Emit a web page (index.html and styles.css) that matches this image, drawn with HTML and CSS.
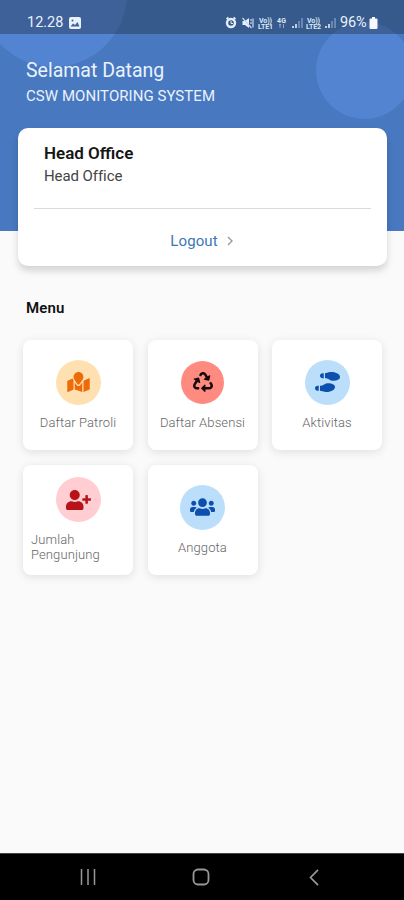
FILE: index.html
```html
<!DOCTYPE html>
<html lang="id">
<head>
<meta charset="utf-8">
<title>CSW Monitoring System</title>
<link rel="stylesheet" href="styles.css">
</head>
<body>
<div class="phone">
  <header class="hero">
    <span class="bubble bubble-left"></span>
    <span class="bubble bubble-right"></span>
    <div class="status">
      <span class="clock">12.28</span>
      <svg class="photo" viewBox="0 0 12 12"><rect width="12" height="12" rx="2" fill="#e9f1fb"/><path d="M1.5 9.5 4 6.5l2 1.5 2.5-3 2 4.500z" fill="#40639b"/><circle cx="3.500" cy="3.500" r="1" fill="#40639b"/></svg>
      <svg class="signals" viewBox="0 0 112 14">
        <g fill="none" stroke="#e6eef9">
          <path d="M1.500 3 3.500 1.500M10.500 3 8.500 1.500" stroke-width="1.600"/>
          <circle cx="6" cy="7" r="4" stroke-width="2.400"/><path d="M6 5v2.500h2" stroke-width="1"/>
        </g>
        <path d="M17.500 5h2.500l4-3v10l-4-3h-2.500z" fill="#e6eef9"/>
        <path d="M17.500 2l9 10M26 3v2M26 6v2M28 2.500v9" stroke="#c9d8ee" stroke-width="1.200"/>
        <g fill="#dce7f5" class="tiny">
          <text x="34" y="6.500" textLength="13">Vo))</text><text x="33" y="13" textLength="15">LTE1</text>
          <text x="52" y="6.500" textLength="9">4G</text>
          <text x="82" y="6.500" textLength="13">Vo))</text><text x="81" y="13" textLength="15">LTE2</text>
        </g>
        <path d="M55 12V8M53.800 9.200 55 8l1.200 1.200M58.500 8v4" fill="none" stroke="#8fa8cf"/>
        <path d="M68 12v-2M71 12V8M101 12v-2M104 12V8" stroke="#d5e2f3" stroke-width="1.700"/>
        <path d="M74 12V5M77 12V2M107 12V5M110 12V2" stroke="#7c98c4" stroke-width="1.500"/>
      </svg>
      <span class="percent">96%</span>
      <svg class="battery" viewBox="0 0 9 12"><path d="M3 0h3v1.500h1.500a1 1 0 0 1 1 1V11a1 1 0 0 1-1 1h-6a1 1 0 0 1-1-1V2.500a1 1 0 0 1 1-1H3z" fill="#f5f9ff"/></svg>
    </div>
    <h1>Selamat Datang</h1>
    <p class="system">CSW MONITORING SYSTEM</p>
  </header>

  <section class="account">
    <div class="who"><h2>Head Office</h2><p>Head Office</p></div>
    <div class="logout"><span>Logout</span><svg viewBox="0 0 6 10"><path d="M1 1l4 4-4 4" fill="none" stroke="#999" stroke-width="1.400"/></svg></div>
  </section>

  <main>
    <h3>Menu</h3>
    <div class="grid">
      <div class="tile">
        <span class="disc sand"><svg width="23" height="20" viewBox="0 0 576 512"><path d="M288 0c-69.590 0-126 56.410-126 126 0 56.260 82.350 158.800 113.900 196.020 6.390 7.540 17.820 7.540 24.200 0C331.650 284.800 414 182.260 414 126 414 56.410 357.590 0 288 0zM20.120 215.950A32.006 32.006 0 0 0 0 245.660v250.320c0 11.320 11.430 19.060 21.940 14.860L160 448V214.920c-8.840-15.980-16.070-31.540-21.250-46.420L20.120 215.950zM288 359.670c-14.070 0-27.380-6.180-36.510-16.960-19.660-23.200-40.570-49.620-59.490-76.720v182l192 64V266c-18.920 27.090-39.820 53.520-59.490 76.720-9.130 10.770-22.440 16.950-36.510 16.950zm266.060-198.510L416 224v288l139.880-55.950A31.996 31.996 0 0 0 576 426.340V176.020c0-11.320-11.430-19.060-21.940-14.860z"/></svg></span>
        <p>Daftar Patroli</p>
      </div>
      <div class="tile">
        <span class="disc coral"><svg width="20" height="20" viewBox="0 0 512 512"><path d="M184.561 261.903c3.232 13.997-12.123 24.635-24.068 17.168l-40.736-25.455-50.867 81.402C55.606 356.273 70.960 384 96.012 384H148c6.627 0 12 5.373 12 12v40c0 6.627-5.373 12-12 12H96.115c-75.334 0-121.302-83.048-81.408-146.880l50.822-81.388-40.725-25.448c-12.081-7.547-8.966-25.961 4.879-29.158l110.237-25.450c8.611-1.988 17.201 3.381 19.189 11.990l25.452 110.237zm98.561-182.915l41.289 66.076-40.740 25.457c-12.051 7.528-9 25.953 4.879 29.158l110.237 25.450c8.672 1.999 17.215-3.438 19.189-11.990l25.450-110.237c3.197-13.844-11.990-24.719-24.068-17.168l-40.687 25.424-41.263-66.082c-37.521-60.033-125.209-60.171-162.816 0l-17.963 28.766c-3.510 5.620-1.800 13.021 3.820 16.533l33.919 21.195c5.620 3.512 13.024 1.803 16.536-3.817l17.961-28.743c12.712-20.341 41.973-19.676 54.257-.022zM497.288 301.120l-27.515-44.065c-3.511-5.623-10.916-7.334-16.538-3.821l-33.861 21.159c-5.620 3.512-7.330 10.915-3.818 16.536l27.564 44.112c13.257 21.211-2.057 48.960-27.136 48.960H320V336.020c0-14.213-17.242-21.383-27.313-11.313l-80 79.981c-6.249 6.248-6.249 16.379 0 22.627l80 79.989C302.689 517.308 320 510.300 320 495.989V448h95.880c75.274 0 121.335-82.997 81.408-146.880z"/></svg></span>
        <p>Daftar Absensi</p>
      </div>
      <div class="tile">
        <span class="disc sky"><svg width="25" height="20" viewBox="0 0 640 512"><path d="M192 160h32V32h-32c-35.350 0-64 28.650-64 64s28.650 64 64 64zM0 416c0 35.350 28.650 64 64 64h32V352H64c-35.350 0-64 28.650-64 64zm337.460-128c-34.910 0-76.160 13.120-104.730 32-24.790 16.380-44.520 32-104.730 32v128l57.530 15.970c26.210 7.280 53.010 13.120 80.310 15.050 32.690 2.310 65.600.670 97.580-6.200C472.900 481.300 512 429.220 512 384c0-64-84.180-96-174.540-96zM491.420 7.250C459.440.320 426.530-1.330 393.840.990c-27.300 1.930-54.100 7.770-80.310 15.040L256 32v128c60.200 0 79.940 15.620 104.730 32 28.570 18.880 69.820 32 104.730 32C555.820 224 640 192 640 128c0-45.220-39.100-97.300-148.580-120.750z"/></svg></span>
        <p>Aktivitas</p>
      </div>
      <div class="tile">
        <span class="disc rose"><svg width="25" height="20" viewBox="0 0 640 512"><path d="M624 208h-64v-64c0-8.800-7.200-16-16-16h-32c-8.800 0-16 7.200-16 16v64h-64c-8.800 0-16 7.200-16 16v32c0 8.800 7.200 16 16 16h64v64c0 8.800 7.200 16 16 16h32c8.800 0 16-7.200 16-16v-64h64c8.800 0 16-7.200 16-16v-32c0-8.800-7.200-16-16-16zm-400 48c70.700 0 128-57.300 128-128S294.700 0 224 0 96 57.300 96 128s57.300 128 128 128zm89.600 32h-16.700c-22.200 10.200-46.900 16-72.900 16s-50.600-5.800-72.900-16h-16.700C60.200 288 0 348.200 0 422.400V464c0 26.500 21.500 48 48 48h352c26.500 0 48-21.500 48-48v-41.600c0-74.200-60.200-134.400-134.400-134.400z"/></svg></span>
        <p class="two-line">Jumlah Pengunjung</p>
      </div>
      <div class="tile">
        <span class="disc sky"><svg width="25" height="20" viewBox="0 0 640 512"><path d="M96 224c35.300 0 64-28.700 64-64s-28.700-64-64-64-64 28.700-64 64 28.700 64 64 64zm448 0c35.300 0 64-28.700 64-64s-28.700-64-64-64-64 28.700-64 64 28.700 64 64 64zm32 32h-64c-17.600 0-33.500 7.100-45.100 18.600 40.300 22.100 68.900 62 75.100 109.400h66c17.700 0 32-14.300 32-32v-32c0-35.300-28.700-64-64-64zm-256 0c61.900 0 112-50.100 112-112S381.900 32 320 32 208 82.100 208 144s50.100 112 112 112zm76.800 32h-8.300c-20.800 10-43.900 16-68.500 16s-47.600-6-68.500-16h-8.300C179.600 288 128 339.600 128 403.200V432c0 26.500 21.500 48 48 48h288c26.500 0 48-21.500 48-48v-28.800c0-63.600-51.600-115.200-115.200-115.200zm-223.700-13.400C161.500 263.100 145.600 256 128 256H64c-35.300 0-64 28.700-64 64v32c0 17.700 14.300 32 32 32h65.900c6.300-47.400 34.900-87.300 75.200-109.400z"/></svg></span>
        <p>Anggota</p>
      </div>
    </div>
  </main>

  <nav class="navbar">
    <svg width="16" height="16" viewBox="0 0 16 16"><path d="M1.500 0v16M8 0v16M14.500 0v16" stroke="#989898" stroke-width="1.500"/></svg>
    <svg width="18" height="18" viewBox="0 0 18 18"><rect x="1.500" y="1.500" width="15" height="15" rx="4.500" fill="none" stroke="#989898" stroke-width="1.800"/></svg>
    <svg width="10" height="17" viewBox="0 0 10 17"><path d="M9 .800 1.500 8.500 9 16.200" fill="none" stroke="#989898" stroke-width="1.700"/></svg>
  </nav>
</div>
</body>
</html>
```

FILE: styles.css
```css
* { box-sizing: border-box; }
body, h1, h2, h3, p { margin: 0; }
body { font-family: Roboto, "Liberation Sans", sans-serif; background: #fafafa; }
svg { display: block; }
.phone { height: 900px; display: flex; flex-direction: column; background: #fafafa; overflow: hidden; }

.hero { position: relative; height: 231px; flex: none; background: #4878bf; color: #eaf2fd; overflow: hidden; isolation: isolate; }
.bubble { position: absolute; border-radius: 50%; background: #5284d1; z-index: -1; }
.bubble-left { left: -20px; top: -80px; width: 147px; height: 147px; }
.bubble-right { left: 316px; top: 22px; width: 97px; height: 97px; }
.status { height: 34px; display: flex; align-items: center; padding: 11px 26px 0 27px; background: rgba(31, 44, 68, .4); }
.clock { width: 37px; margin-right: 5px; font-size: 14.500px; line-height: 20px; white-space: nowrap; }
.photo { width: 12px; height: 12px; }
.signals { width: 112px; height: 14px; margin-left: auto; }
.tiny { font: 700 7px Roboto, sans-serif; }
.percent { margin-left: 3px; width: 28px; font-size: 14.500px; line-height: 20px; letter-spacing: -.2px; white-space: nowrap; }
.battery { width: 9px; height: 12px; margin-left: 1px; }
h1 { margin: 24px 0 0 26px; font-size: 19.500px; line-height: 26px; font-weight: 400; }
.system { margin: 3px 0 0 26px; font-size: 15px; line-height: 18px; letter-spacing: .05px; }

.account { position: relative; flex: none; height: 138px; margin: -103px 17px 0 18px; padding: 0 16px; border-radius: 10px; background: #fff; box-shadow: 0 5px 7px rgba(0, 0, 0, .15); }
.who { height: 81px; padding: 14px 0 0 10px; border-bottom: 1px solid #dadada; }
h2 { font-size: 17px; line-height: 22px; font-weight: 600; color: #151515; }
.who p { margin-top: 2px; font-size: 15px; line-height: 20px; color: #444; letter-spacing: -.08px; }
.logout { display: flex; justify-content: center; align-items: center; gap: 9px; height: 57px; padding: 7px 2px 0 0; font-size: 15px; color: #3b78b5; letter-spacing: .1px; }
.logout svg { width: 6px; height: 10px; }

main { flex: 1; padding: 32px 22px 0 23px; }
h3 { margin-left: 3px; font-size: 15px; line-height: 20px; font-weight: 600; color: #111; letter-spacing: .1px; }
.grid { display: grid; grid-template-columns: repeat(3, 110px); grid-auto-rows: 110px; gap: 15px 14.500px; margin-top: 22px; }
.tile { display: flex; flex-direction: column; align-items: center; justify-content: center; gap: 10px; padding: 0 8px 1px; border-radius: 8px; background: #fff; box-shadow: 0 2px 10px rgba(0, 0, 0, .11); }
.tile p { font-size: 13px; line-height: 15px; font-weight: 300; color: #666; white-space: nowrap; letter-spacing: .1px; }
.tile .two-line { width: 94px; white-space: normal; }
.disc { display: flex; flex: none; align-items: center; justify-content: center; width: 45px; height: 45px; border-radius: 50%; }
.disc svg { fill: currentColor; }
.sand { background: #ffe0b0; color: #eb6c08; }
.coral { width: 43px; height: 43px; margin: 1px; background: #ff8a80; color: #160b0a; }
.sky { background: #bbdefb; color: #0d4fad; }
.rose { background: #ffcdd2; color: #b9131a; }

.navbar { flex: none; height: 47px; display: grid; grid-template-columns: repeat(3, 113px); justify-content: center; justify-items: center; align-items: center; padding-right: 2px; background: #000; border-top: 1px solid #444; }
```
